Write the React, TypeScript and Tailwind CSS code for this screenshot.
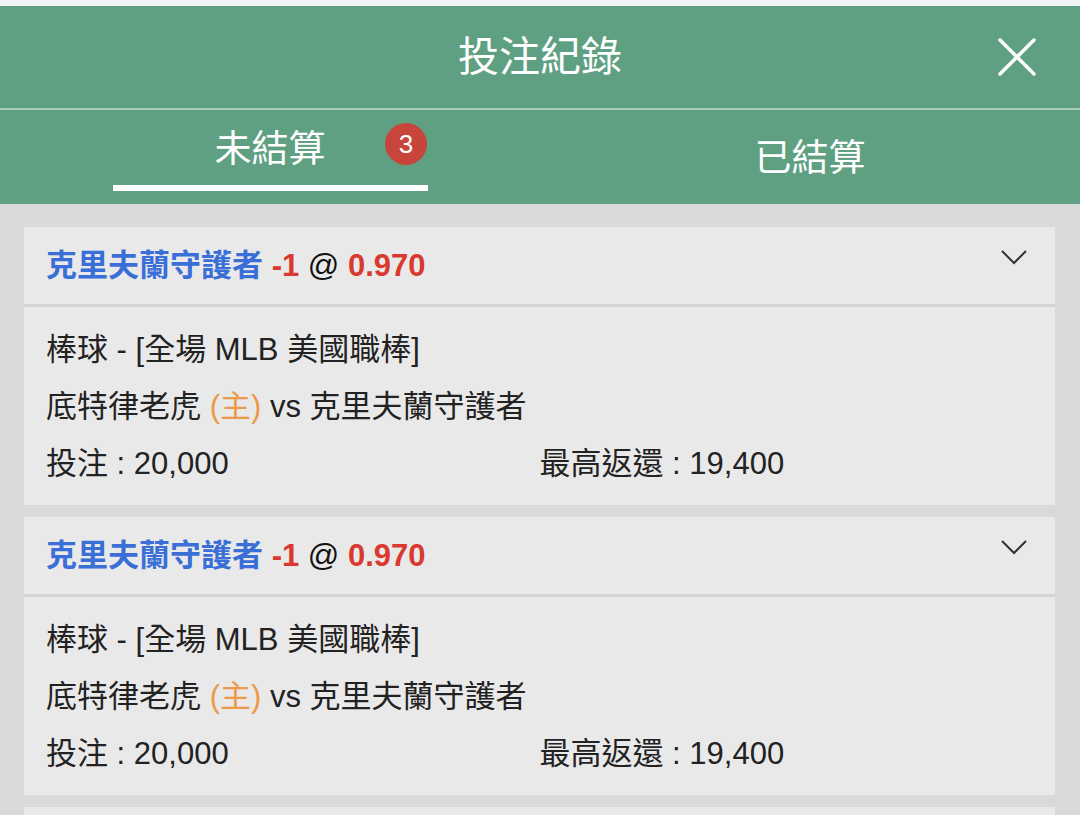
const bets = [
  { id: 1, team: "克里夫蘭守護者", line: "-1", odds: "0.970", league: "棒球 - [全場 MLB 美國職棒]", home: "底特律老虎", away: "克里夫蘭守護者", stake: "20,000", payout: "19,400" },
  { id: 2, team: "克里夫蘭守護者", line: "-1", odds: "0.970", league: "棒球 - [全場 MLB 美國職棒]", home: "底特律老虎", away: "克里夫蘭守護者", stake: "20,000", payout: "19,400" },
  { id: 3, team: "克里夫蘭守護者", line: "-1", odds: "0.970", league: "棒球 - [全場 MLB 美國職棒]", home: "底特律老虎", away: "克里夫蘭守護者", stake: "20,000", payout: "19,400" },
];

type Bet = (typeof bets)[number];

function BetCard({ bet }: { bet: Bet }) {
  return (
    <div className="shrink-0 bg-[#e9e9e9]">
      <div className="flex h-[80px] items-center justify-between border-b-[3px] border-[#d5d5d5] pl-[22px] pr-[28px]">
        <div className="text-[31px] leading-none">
          <span className="font-bold text-[#3a6fd8]">{bet.team}</span>{" "}
          <span className="font-bold text-[#d9392e]">{bet.line}</span>{" "}
          <span className="text-[#111]">@</span>{" "}
          <span className="font-bold text-[#d9392e]">{bet.odds}</span>
        </div>
        <svg width="26" height="15" viewBox="0 0 26 15" className="mb-[16px]">
          <polyline points="1,1 13,13 25,1" fill="none" stroke="#333" strokeWidth="2" />
        </svg>
      </div>
      <div className="px-[22px] pt-[14px] pb-[13px] text-[31px] leading-[57px] text-[#222]">
        <div>{bet.league}</div>
        <div>
          {bet.home} <span className="text-[#eb9a4a]">(主)</span> vs {bet.away}
        </div>
        <div className="grid grid-cols-2">
          <div>投注 : {bet.stake}</div>
          <div>最高返還 : {bet.payout}</div>
        </div>
      </div>
    </div>
  );
}

export default function App() {
  return (
    <div className="flex h-[815px] w-[1080px] flex-col overflow-hidden bg-[#d9d9d9] font-['Liberation_Sans','Noto_Sans_CJK_TC',sans-serif]">
      <div className="h-[6px] shrink-0 bg-[#f3f3f3]" />
      <div className="grid h-[102px] shrink-0 grid-cols-[1fr_auto_1fr] items-center bg-[#5fa083]">
        <div />
        <h1 className="text-[41px] leading-none text-white">投注紀錄</h1>
        <div className="flex justify-end pr-[44px]">
          <svg width="38" height="38" viewBox="0 0 38 38">
            <path d="M2 2 L36 36 M36 2 L2 36" stroke="#fff" strokeWidth="3.5" strokeLinecap="round" />
          </svg>
        </div>
      </div>
      <div className="h-[2px] shrink-0 bg-[#a9cdbb]" />
      <div className="grid h-[94px] shrink-0 grid-cols-2 bg-[#5fa083] text-white">
        <div className="relative flex flex-col items-center">
          <div className="mt-[20px] text-[37px] leading-[40px]">未結算</div>
          <div className="mt-[15px] h-[6px] w-[315px] bg-white" />
          <span className="absolute left-[385px] top-[13px] flex h-[42px] w-[42px] items-center justify-center rounded-full bg-[#c8453c] text-[26px] leading-none">
            3
          </span>
        </div>
        <div className="flex justify-center">
          <div className="mt-[29px] text-[37px] leading-[40px]">已結算</div>
        </div>
      </div>
      <div className="flex flex-col gap-[12px] pl-[24px] pr-[25px] pt-[23px]">
        {bets.map((bet) => (
          <BetCard key={bet.id} bet={bet} />
        ))}
      </div>
    </div>
  );
}
